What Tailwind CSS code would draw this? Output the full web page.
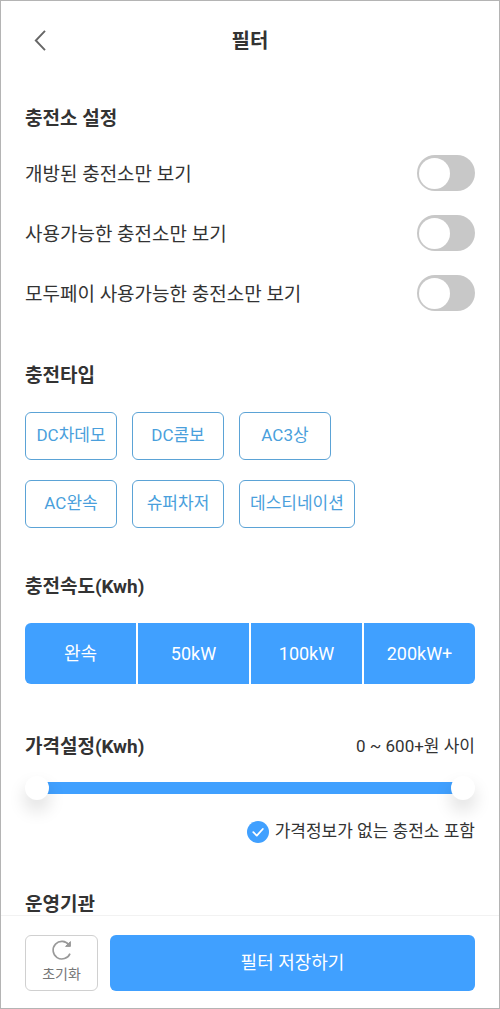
<!DOCTYPE html>
<html lang="ko">

<head>
    <meta charset="UTF-8">
    <meta name="viewport" content="width=device-width, initial-scale=1.0">
    <title>필터</title>
    <script src="https://cdn.jsdelivr.net/npm/@tailwindcss/browser@4"></script>
</head>

<body class="h-screen flex flex-col border border-[#b4b4b4] bg-white text-[#333] font-[Roboto,'Noto_Sans_CJK_KR',sans-serif]">
    <header class="grid grid-cols-[32px_1fr_32px] items-center h-20 px-6 shrink-0">
        <button type="button" aria-label="뒤로" class="h-8 flex items-center pl-2">
            <svg class="w-4 h-6" viewBox="0 0 16 24" fill="none" stroke="#666" stroke-width="1.9">
                <path d="M12 1.8 2.8 11.5 12 21.2" />
            </svg>
        </button>
        <h1 class="text-xl font-bold text-center">필터</h1>
    </header>

    <main class="flex-1 min-h-0 overflow-hidden px-6 pt-6">
        <section class="mb-[51px]">
            <h2 class="text-[19px] leading-7 font-bold mb-[22px]">충전소 설정</h2>
            <div class="flex flex-col gap-6 text-[19px]">
                <label class="flex items-center justify-between h-9">
                    <span class="pt-1">개방된 충전소만 보기</span>
                    <input type="checkbox" role="switch"
                        class="appearance-none flex items-center w-[58px] h-9 px-[2px] rounded-full bg-[#c8c8c8] before:block before:size-[31px] before:rounded-full before:bg-white checked:bg-[#40a0ff] checked:justify-end">
                </label>
                <label class="flex items-center justify-between h-9">
                    <span class="pt-1">사용가능한 충전소만 보기</span>
                    <input type="checkbox" role="switch"
                        class="appearance-none flex items-center w-[58px] h-9 px-[2px] rounded-full bg-[#c8c8c8] before:block before:size-[31px] before:rounded-full before:bg-white checked:bg-[#40a0ff] checked:justify-end">
                </label>
                <label class="flex items-center justify-between h-9">
                    <span class="pt-1">모두페이 사용가능한 충전소만 보기</span>
                    <input type="checkbox" role="switch"
                        class="appearance-none flex items-center w-[58px] h-9 px-[2px] rounded-full bg-[#c8c8c8] before:block before:size-[31px] before:rounded-full before:bg-white checked:bg-[#40a0ff] checked:justify-end">
                </label>
            </div>
        </section>

        <section class="mb-[45px]">
            <h2 class="text-[19px] leading-7 font-bold mb-[22px]">충전타입</h2>
            <div class="grid grid-cols-[auto_auto_1fr] justify-items-start gap-x-[15px] gap-y-5 text-[17px] text-[#4a9fdc]">
                <button type="button" class="min-w-[92px] h-12 px-[10px] rounded-md border border-[#5ba3d6]">DC차데모</button>
                <button type="button" class="min-w-[92px] h-12 px-[10px] rounded-md border border-[#5ba3d6]">DC콤보</button>
                <button type="button" class="min-w-[92px] h-12 px-[10px] rounded-md border border-[#5ba3d6]">AC3상</button>
                <button type="button" class="min-w-[92px] h-12 px-[10px] rounded-md border border-[#5ba3d6]">AC완속</button>
                <button type="button" class="min-w-[92px] h-12 px-[10px] rounded-md border border-[#5ba3d6]">슈퍼차저</button>
                <button type="button" class="min-w-[92px] h-12 px-[10px] rounded-md border border-[#5ba3d6]">데스티네이션</button>
            </div>
        </section>

        <section class="mb-[49px]">
            <h2 class="text-[19px] leading-7 font-bold mb-[22px]">충전속도(Kwh)</h2>
            <div class="grid grid-cols-4 gap-[2px] h-[61px] rounded-md overflow-hidden text-lg text-white">
                <button type="button" class="bg-[#40a0ff]">완속</button>
                <button type="button" class="bg-[#40a0ff]">50kW</button>
                <button type="button" class="bg-[#40a0ff]">100kW</button>
                <button type="button" class="bg-[#40a0ff]">200kW+</button>
            </div>
        </section>

        <section class="mb-[47px]">
            <div class="flex items-center justify-between mb-[15px]">
                <h2 class="text-[19px] leading-7 font-bold">가격설정(Kwh)</h2>
                <output id="priceText" for="minPrice maxPrice" class="text-[17px]">0 ~ 600+원 사이</output>
            </div>
            <div class="relative h-6 flex items-center px-3">
                <div class="w-full h-3 bg-[#40a0ff]"></div>
                <input type="range" id="minPrice" aria-label="최소 가격" min="0" max="600" step="50" value="0"
                    class="absolute inset-0 w-full h-6 appearance-none bg-transparent pointer-events-none [&::-webkit-slider-thumb]:appearance-none [&::-webkit-slider-thumb]:pointer-events-auto [&::-webkit-slider-thumb]:size-6 [&::-webkit-slider-thumb]:rounded-full [&::-webkit-slider-thumb]:bg-white [&::-webkit-slider-thumb]:shadow-[0_10px_18px_rgba(0,0,0,0.14)]">
                <input type="range" id="maxPrice" aria-label="최대 가격" min="0" max="600" step="50" value="600"
                    class="absolute inset-0 w-full h-6 appearance-none bg-transparent pointer-events-none [&::-webkit-slider-thumb]:appearance-none [&::-webkit-slider-thumb]:pointer-events-auto [&::-webkit-slider-thumb]:size-6 [&::-webkit-slider-thumb]:rounded-full [&::-webkit-slider-thumb]:bg-white [&::-webkit-slider-thumb]:shadow-[0_10px_18px_rgba(0,0,0,0.14)]">
            </div>
            <label class="flex items-center justify-end gap-[6px] h-6 mt-5 text-[17px]">
                <span class="grid size-[22px]">
                    <input type="checkbox" checked
                        class="col-start-1 row-start-1 appearance-none size-[22px] rounded-full bg-[#c8c8c8] checked:bg-[#40a0ff]">
                    <svg class="col-start-1 row-start-1 size-[22px] pointer-events-none" viewBox="0 0 22 22" fill="none"
                        stroke="#fff" stroke-width="1.8" stroke-linecap="round" stroke-linejoin="round">
                        <path d="m6.3 11.2 3.5 3.4 6-6.6" />
                    </svg>
                </span>
                가격정보가 없는 충전소 포함
            </label>
        </section>

        <section>
            <h2 class="text-[19px] leading-7 font-bold">운영기관</h2>
        </section>
    </main>

    <footer class="flex gap-3 px-6 pt-[19px] pb-[17px] border-t border-[#f2f2f2] bg-white shrink-0">
        <button type="button" id="reset"
            class="flex flex-col items-center justify-center gap-[2px] w-[73px] h-14 pb-1 rounded-md border border-[#d0d0d0] text-sm text-[#777]">
            <svg class="size-6 shrink-0" viewBox="0 0 24 24" fill="none" stroke="#999" stroke-width="1.6">
                <path d="M20 15.6A8.8 8.8 0 1 1 19 7" />
                <path d="M20.4 3.6v4.8h-4.8z" fill="#999" stroke-width="1" />
            </svg>
            초기화
        </button>
        <button type="button" class="flex-1 h-14 rounded-md bg-[#40a0ff] text-lg text-white">필터 저장하기</button>
    </footer>

    <script>
        const minPrice = document.getElementById('minPrice');
        const maxPrice = document.getElementById('maxPrice');
        const priceText = document.getElementById('priceText');

        function updatePrice() {
            const low = Math.min(+minPrice.value, +maxPrice.value);
            const high = Math.max(+minPrice.value, +maxPrice.value);
            priceText.textContent = low + ' ~ ' + high + (high === 600 ? '+' : '') + '원 사이';
        }

        minPrice.addEventListener('input', updatePrice);
        maxPrice.addEventListener('input', updatePrice);

        document.getElementById('reset').addEventListener('click', function () {
            document.querySelectorAll('[role=switch]').forEach(el => el.checked = false);
            minPrice.value = 0;
            maxPrice.value = 600;
            updatePrice();
        });
    </script>
</body>

</html>
